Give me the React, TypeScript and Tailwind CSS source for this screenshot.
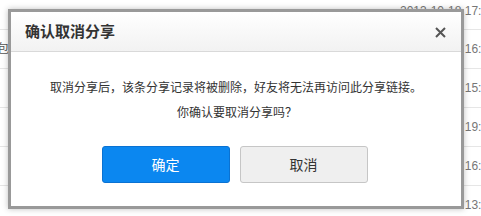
import React from "react";

const rows = [
  { h: "h-[30px]", left: "", time: "2013-10-18 17:42" },
  { h: "h-[39px]", left: "包", time: "2013-10-18 16:20" },
  { h: "h-[39px]", left: "", time: "2013-10-18 15:11" },
  { h: "h-[39px]", left: "", time: "2013-10-17 19:35" },
  { h: "h-[39px]", left: "", time: "2013-10-17 16:08" },
  { h: "h-[39px]", left: "", time: "2013-10-17 13:52" },
];

export default function App() {
  return (
    <div
      className="relative w-[481px] h-[216px] overflow-hidden bg-white"
      style={{ fontFamily: '"Liberation Sans", "Noto Sans CJK SC", sans-serif' }}
    >
      {/* background list */}
      <div className="flex flex-col">
        {rows.map((r, i) => (
          <div
            key={i}
            className={`${r.h} flex items-center border-b border-[#e6e6e6] shrink-0 ${i === 0 ? "items-start pt-[2px]" : ""}`}
          >
            <div className="flex-1 -ml-[3px] text-[12px] text-[#555]">{r.left}</div>
            <div className="w-[81px] text-[12px] text-[#777] whitespace-nowrap">{r.time}</div>
          </div>
        ))}
      </div>

      {/* dialog */}
      <div className="absolute left-[8px] top-[9px] w-[456px] h-[200px] border-[3px] border-[#999] bg-white shadow-[0_0_6px_rgba(0,0,0,0.25)] flex flex-col">
        <div className="h-[40px] shrink-0 flex items-center justify-between pl-[14px] pr-[15px] bg-gradient-to-b from-white to-[#f2f2f2] border-b border-[#d9d9d9]">
          <span
            className="text-[15px] font-bold text-[#333]"
            style={{ fontFamily: '"Noto Sans CJK SC", sans-serif' }}
          >
            确认取消分享
          </span>
          <svg width="11" height="11" viewBox="0 0 11 11" className="mt-[1px]">
            <path d="M1 1 L10 10 M10 1 L1 10" stroke="#555" strokeWidth="2" />
          </svg>
        </div>
        <div
          className="flex flex-col items-center pt-[22px] text-[12px] leading-[25px] text-[#333]"
          style={{ fontFamily: '"Noto Sans CJK SC", sans-serif' }}
        >
          <p>取消分享后，该条分享记录将被删除，好友将无法再访问此分享链接。</p>
          <p className="pl-[2px]">你确认要取消分享吗？</p>
          <div className="flex gap-[10px] mt-[22px] pr-[3px]">
            <button className="w-[128px] h-[37px] rounded-[3px] bg-[#0b87f0] border border-[#0a72d2] text-white text-[14px]">
              确定
            </button>
            <button className="w-[128px] h-[37px] rounded-[3px] bg-[#efefef] border border-[#c6c6c6] text-[#333] text-[14px]">
              取消
            </button>
          </div>
        </div>
      </div>
    </div>
  );
}
